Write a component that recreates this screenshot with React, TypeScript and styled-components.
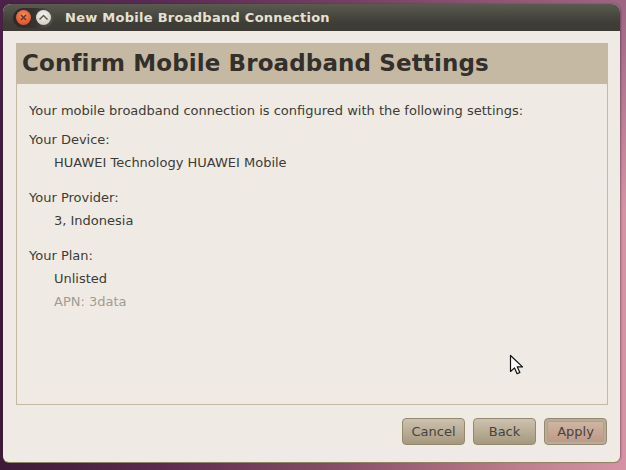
import React from 'react';
import styled, { createGlobalStyle } from 'styled-components';

const GlobalStyle = createGlobalStyle`
    html, body {
        margin: 0;
        padding: 0;
    }
    body {
        font-family: "DejaVu Sans", "Liberation Sans", sans-serif;
    }
`;

const Desktop = styled.div`
    position: relative;
    box-sizing: border-box;
    width: 626px;
    height: 470px;
    overflow: hidden;
    padding: 4px 6px 8px 3px;
    background:
        linear-gradient(180deg, rgba(90, 45, 90, 0.45) 0%, rgba(90, 45, 90, 0) 45%),
        linear-gradient(90deg, #3e1a38 0%, #5a2a4f 25%, #8a4f68 55%, #c2808f 85%, #d594a6 100%);
`;

const Window = styled.div`
    display: flex;
    flex-direction: column;
    height: 100%;
    border-radius: 8px 8px 6px 6px;
    overflow: hidden;
    background: #efebe4;
    box-shadow: 0 1px 0 #8f8566, 1px 0 2px rgba(30, 10, 30, 0.35);
`;

const TitleBar = styled.div`
    display: flex;
    align-items: center;
    flex: 0 0 27px;
    padding-left: 10px;
    background: linear-gradient(#5b5a50, #3e3d36 70%, #3c3b35);
`;

const ButtonTray = styled.div`
    display: flex;
    align-items: center;
    gap: 5px;
    height: 20px;
    padding: 0 2px 0 3px;
    border-radius: 10px;
    background: linear-gradient(90deg, #2a2925, #35342f 55%, #54534b);
`;

const RoundButton = styled.div<{ $close?: boolean }>`
    display: flex;
    align-items: center;
    justify-content: center;
    width: 15px;
    height: 15px;
    border-radius: 50%;
    background: ${p => p.$close
        ? 'radial-gradient(circle at 50% 35%, #f78a5c, #e0562a 75%)'
        : 'radial-gradient(circle at 50% 35%, #f8f6f0, #cfccc1 80%)'};
`;

const WindowTitle = styled.span`
    margin-left: 12px;
    font-size: 13px;
    font-weight: bold;
    letter-spacing: 0.27px;
    color: #e6e1d4;
`;

const Body = styled.div`
    display: flex;
    flex-direction: column;
    flex: 1;
    padding: 12px 12px 0 13px;
`;

const Panel = styled.div`
    display: flex;
    flex-direction: column;
    box-sizing: border-box;
    height: 362px;
    border: 1px solid #c6b9a4;
    border-top: 0;
`;

const Header = styled.h1`
    margin: 0 -1px;
    height: 41px;
    padding-left: 6px;
    font-size: 23px;
    font-weight: bold;
    line-height: 40px;
    letter-spacing: 0.12px;
    color: #33302c;
    background: #c6b9a4;
`;

const Content = styled.div`
    display: flex;
    flex-direction: column;
    padding: 18px 12px 0;
    font-size: 13px;
    line-height: 18px;
    color: #3c3b37;
`;

const Intro = styled.p`
    margin: 0 0 11px;
`;

const Section = styled.div`
    margin-bottom: 17px;
`;

const Label = styled.div`
    margin-bottom: 5px;
`;

const Value = styled.div<{ $muted?: boolean }>`
    margin-left: 25px;
    margin-top: ${p => (p.$muted ? '5px' : '0')};
    color: ${p => (p.$muted ? '#a19c93' : '#3c3b37')};
`;

const Footer = styled.div`
    display: flex;
    justify-content: flex-end;
    gap: 8px;
    padding: 13px 1px 0 0;
`;

const ActionButton = styled.button<{ $focused?: boolean }>`
    box-sizing: border-box;
    width: 63px;
    height: 27px;
    padding: 0;
    border: 1px solid #94896f;
    border-radius: 4px;
    font-family: inherit;
    font-size: 13px;
    color: #45433e;
    background: linear-gradient(#cdc2b0, #a6987f);
    ${p => p.$focused && `
        background: linear-gradient(#d2b9a6, #bd9683);
        box-shadow: inset 0 0 0 2px #b8ad9b;
        outline: 1px solid #e58a72;
        outline-offset: -4px;
    `}
`;

const Pointer = styled.svg`
    position: absolute;
    left: 509px;
    top: 354px;
`;

const sections = [
    { label: 'Your Device:', values: ['HUAWEI Technology HUAWEI Mobile'] },
    { label: 'Your Provider:', values: ['3, Indonesia'] },
    { label: 'Your Plan:', values: ['Unlisted'], note: 'APN: 3data' },
];

const App: React.FC = () => (
    <>
        <GlobalStyle />
        <Desktop>
            <Window>
                <TitleBar>
                    <ButtonTray>
                        <RoundButton $close>
                            <svg width="9" height="9" viewBox="0 0 9 9">
                                <path d="M2 2l5 5M7 2L2 7" stroke="#5d3a2c" strokeWidth="1.5" />
                            </svg>
                        </RoundButton>
                        <RoundButton>
                            <svg width="11" height="9" viewBox="0 0 11 9">
                                <path d="M1.5 6.5L5.5 2.5l4 4" fill="none" stroke="#5f5c54" strokeWidth="1.5" />
                            </svg>
                        </RoundButton>
                    </ButtonTray>
                    <WindowTitle>New Mobile Broadband Connection</WindowTitle>
                </TitleBar>
                <Body>
                    <Panel>
                        <Header>Confirm Mobile Broadband Settings</Header>
                        <Content>
                            <Intro>Your mobile broadband connection is configured with the following settings:</Intro>
                            {sections.map(section => (
                                <Section key={section.label}>
                                    <Label>{section.label}</Label>
                                    {section.values.map(value => <Value key={value}>{value}</Value>)}
                                    {section.note && <Value $muted>{section.note}</Value>}
                                </Section>
                            ))}
                        </Content>
                    </Panel>
                    <Footer>
                        <ActionButton>Cancel</ActionButton>
                        <ActionButton>Back</ActionButton>
                        <ActionButton $focused>Apply</ActionButton>
                    </Footer>
                </Body>
            </Window>
            <Pointer width="16" height="22" viewBox="0 0 16 22">
                <path d="M1.5 1.5v16l4-3.6 2.6 5.8 2.8-1.3-2.6-5.5h5.2z" fill="#fff" stroke="#111" strokeWidth="1.2" strokeLinejoin="round" />
            </Pointer>
        </Desktop>
    </>
);

export default App;
